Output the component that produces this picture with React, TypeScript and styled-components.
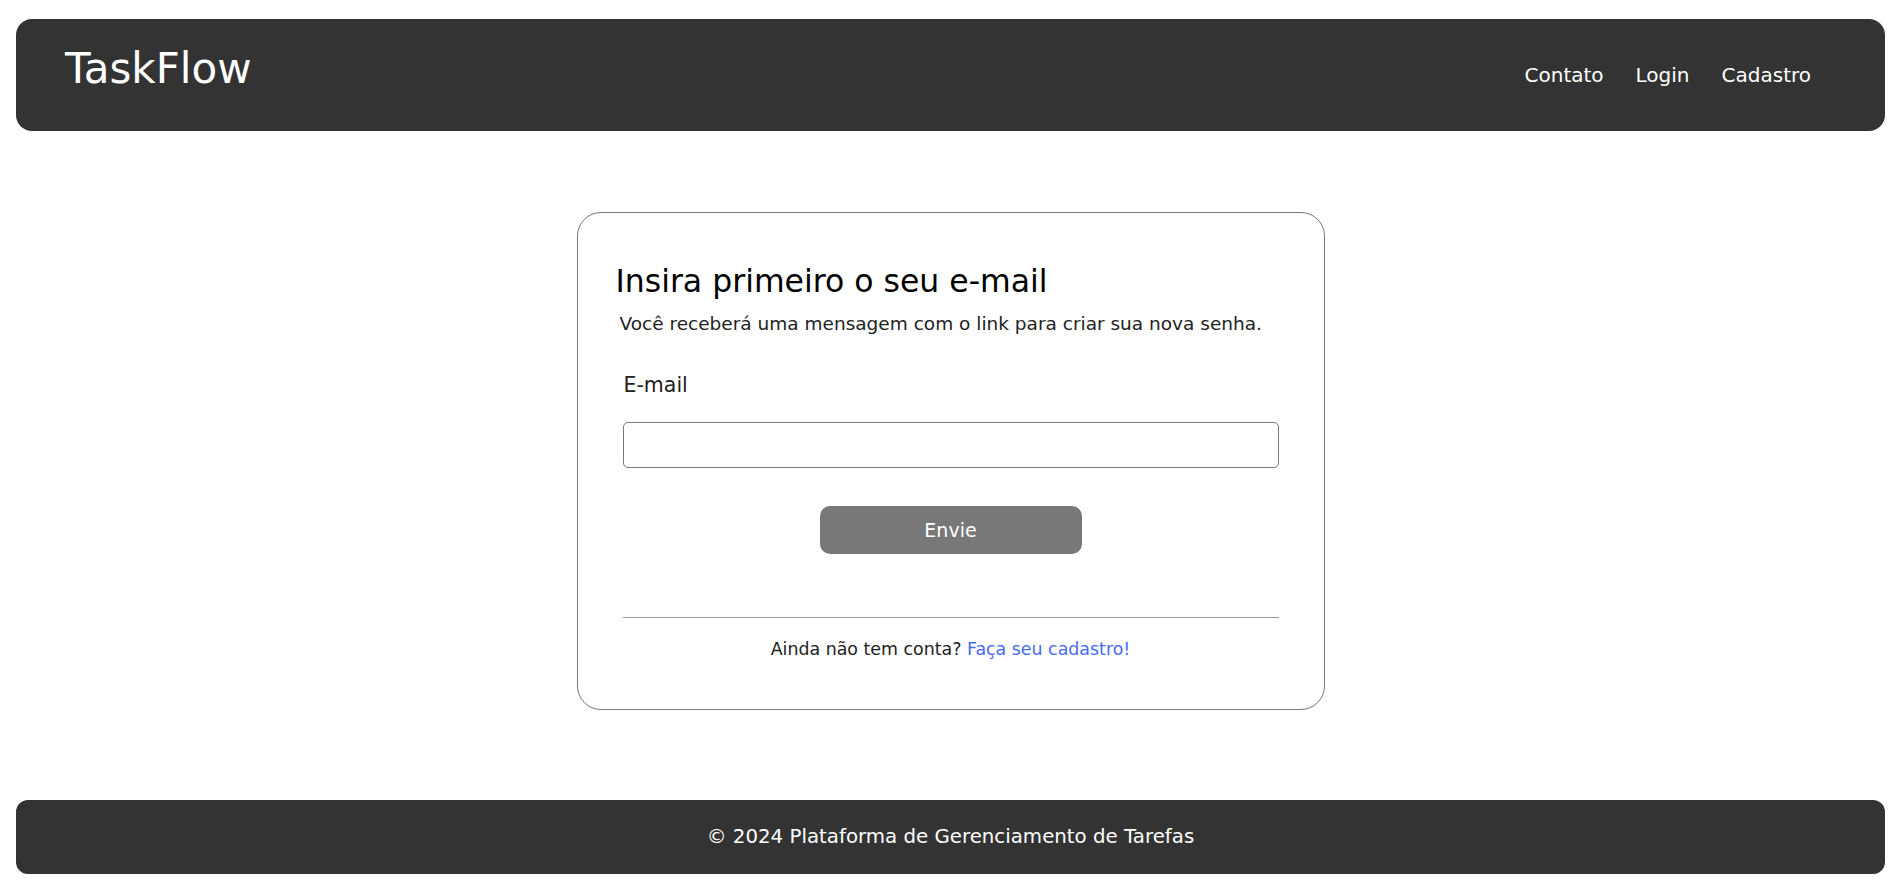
import React from "react";
import styled, { createGlobalStyle } from "styled-components";

const GlobalStyle = createGlobalStyle`
  html, body { margin: 0; padding: 0; background: #fff; }
  body { font-family: "DejaVu Sans", "Liberation Sans", sans-serif; color: #000; }
  * { box-sizing: border-box; }
`;

const Page = styled.div`
  display: flex;
  flex-direction: column;
  padding: 19px 15px 18px 16px;
`;

const Header = styled.header`
  display: flex;
  align-items: center;
  justify-content: space-between;
  height: 112px;
  background: #333333;
  border-radius: 16px;
  padding: 0 74px 0 49px;
`;

const Logo = styled.h1`
  margin: 0 0 12px;
  font-size: 42px;
  font-weight: 400;
  line-height: 1;
  color: #ffffff;
`;

const Nav = styled.nav`
  display: flex;
  gap: 32px;
`;

const NavLink = styled.a`
  color: #ffffff;
  font-size: 20px;
  line-height: 1;
  text-decoration: none;
`;

const Main = styled.main`
  display: flex;
  justify-content: center;
  padding: 81px 0 90px;
`;

const Card = styled.section`
  width: 748px;
  border: 1px solid #777777;
  border-radius: 24px;
  padding: 49px 38px 49px 38px;
  display: flex;
  flex-direction: column;
`;

const Title = styled.h2`
  margin: 0;
  font-size: 31.5px;
  font-weight: 400;
  line-height: 38px;
  color: #000;
`;

const Subtitle = styled.p`
  margin: 12px 0 0 4px;
  font-size: 18.5px;
  line-height: 24px;
  color: #222;
`;

const Form = styled.form`
  margin: 37px auto 0;
  width: 656px;
  display: flex;
  flex-direction: column;
`;

const Label = styled.label`
  margin-left: 1px;
  font-size: 20.5px;
  line-height: 24px;
  color: #222;
`;

const Input = styled.input`
  margin-top: 25px;
  height: 46px;
  width: 100%;
  border: 1px solid #777777;
  border-radius: 5px;
  padding: 0 12px;
  font-family: inherit;
  font-size: 16px;
  outline: none;
`;

const Button = styled.button`
  margin: 38px auto 0;
  width: 262px;
  height: 48px;
  border: none;
  border-radius: 10px;
  background: #787878;
  color: #ffffff;
  font-family: inherit;
  font-size: 19px;
  cursor: pointer;
`;

const Divider = styled.hr`
  margin: 63px 0 0;
  border: none;
  height: 1px;
  background: #9a9a9a;
`;

const SignupText = styled.p`
  margin: 20px 0 0;
  text-align: center;
  font-size: 17.4px;
  line-height: 22px;
  color: #222;
`;

const SignupLink = styled.a`
  color: #4a6cf5;
  text-decoration: none;
`;

const Footer = styled.footer`
  display: flex;
  align-items: center;
  justify-content: center;
  height: 74px;
  background: #333333;
  border-radius: 12px;
  color: #ffffff;
  font-size: 19.8px;
  line-height: 1;
`;

export default function App() {
  return (
    <>
      <GlobalStyle />
      <Page>
        <Header>
          <Logo>TaskFlow</Logo>
          <Nav>
            <NavLink href="#">Contato</NavLink>
            <NavLink href="#">Login</NavLink>
            <NavLink href="#">Cadastro</NavLink>
          </Nav>
        </Header>
        <Main>
          <Card>
            <Title>Insira primeiro o seu e-mail</Title>
            <Subtitle>Você receberá uma mensagem com o link para criar sua nova senha.</Subtitle>
            <Form onSubmit={(e) => e.preventDefault()}>
              <Label htmlFor="email">E-mail</Label>
              <Input id="email" type="email" />
              <Button type="submit">Envie</Button>
              <Divider />
            </Form>
            <SignupText>
              Ainda não tem conta? <SignupLink href="#">Faça seu cadastro!</SignupLink>
            </SignupText>
          </Card>
        </Main>
        <Footer>© 2024 Plataforma de Gerenciamento de Tarefas</Footer>
      </Page>
    </>
  );
}
